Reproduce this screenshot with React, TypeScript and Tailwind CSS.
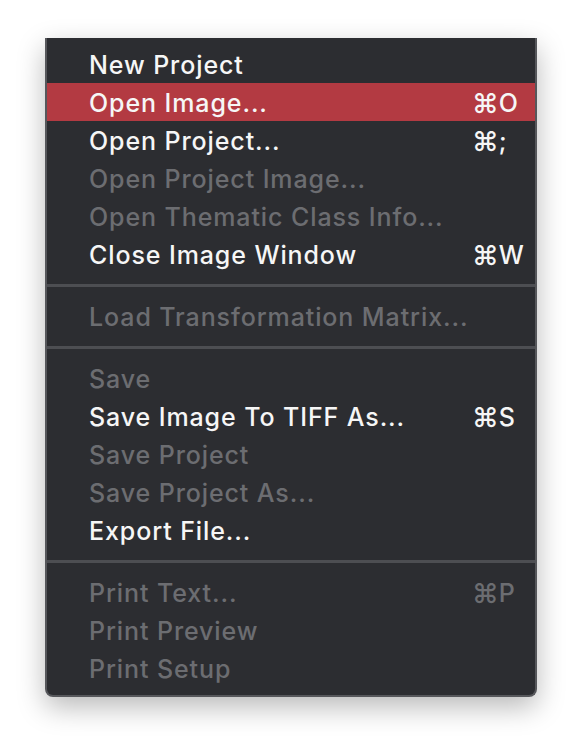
import React from "react";

type Item = { label: string; shortcut?: string; disabled?: boolean; active?: boolean } | "sep";

const items: Item[] = [
  { label: "New Project" },
  { label: "Open Image...", shortcut: "⌘O", active: true },
  { label: "Open Project...", shortcut: "⌘;" },
  { label: "Open Project Image...", disabled: true },
  { label: "Open Thematic Class Info...", disabled: true },
  { label: "Close Image Window", shortcut: "⌘W" },
  "sep",
  { label: "Load Transformation Matrix...", disabled: true },
  "sep",
  { label: "Save", disabled: true },
  { label: "Save Image To TIFF As...", shortcut: "⌘S" },
  { label: "Save Project", disabled: true },
  { label: "Save Project As...", disabled: true },
  { label: "Export File..." },
  "sep",
  { label: "Print Text...", shortcut: "⌘P", disabled: true },
  { label: "Print Preview", disabled: true },
  { label: "Print Setup", disabled: true },
];

export default function App() {
  return (
    <div className="w-[582px] h-[750px] bg-white pt-[38px] pl-[45px]">
      <div
        className="w-[492px] bg-[#2c2d31] border-x-2 border-b-2 border-[#56575b] rounded-b-[8px] pt-[7px] pb-[8px] shadow-[0_10px_28px_rgba(0,0,0,0.28)]"
        style={{ fontFamily: "Inter, 'DejaVu Sans', sans-serif" }}
      >
        {items.map((it, i) =>
          it === "sep" ? (
            <div key={i} className="h-[24px] flex items-center">
              <div className="h-[3px] w-full bg-[#4d4e52]" />
            </div>
          ) : (
            <div
              key={i}
              className={
                "h-[38px] flex items-center text-[25px] font-medium leading-none pt-[2px] " +
                (it.active ? "bg-[#b33a42] " : "") +
                (it.disabled ? "text-[#6c6d71]" : "text-[#f6f6f6]")
              }
            >
              <span className="pl-[42px] w-[425px] shrink-0 tracking-[0.9px] whitespace-nowrap">{it.label}</span>
              {it.shortcut && (
                <span className="flex items-center">
                  <span className="text-[27px]">{it.shortcut.slice(0, 1)}</span>
                  <span>{it.shortcut.slice(1)}</span>
                </span>
              )}
            </div>
          )
        )}
      </div>
    </div>
  );
}
